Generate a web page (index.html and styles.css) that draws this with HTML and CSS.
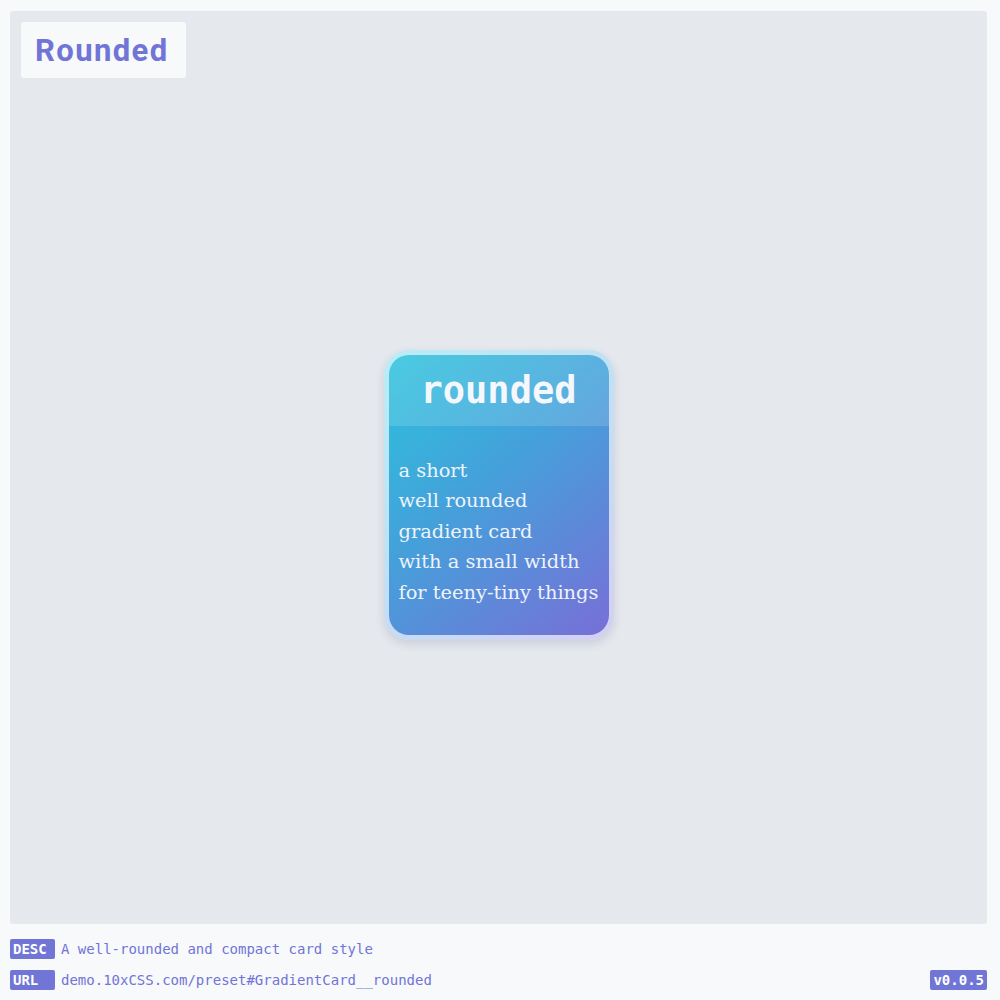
FILE: index.html
```html
<!DOCTYPE html>
<html>
<head>
<meta charset="utf-8">
<link rel="stylesheet" href="styles.css">
</head>
<body>
<main class="stage">
  <div class="title">Rounded</div>
  <div class="card">
    <div class="card-head">rounded</div>
    <div class="card-body">
      <p>a short<br>well rounded<br>gradient card<br>with a small width<br>for teeny-tiny things</p>
    </div>
  </div>
</main>
<footer class="meta">
  <div class="row"><span class="tag">DESC</span><span class="val">A well-rounded and compact card style</span></div>
  <div class="row"><span class="tag tag-url">URL</span><span class="val">demo.10xCSS.com/preset#GradientCard__rounded</span><span class="tag ver">v0.0.5</span></div>
</footer>
</body>
</html>
```
FILE: styles.css
```css
html, body { margin: 0; padding: 0; }
body {
  background: #f8f9fb;
  width: 1000px;
  height: 1000px;
  padding: 11px 13px 0 10px;
  box-sizing: border-box;
  font-family: "DejaVu Sans Mono", monospace;
}
.stage {
  position: relative;
  height: 913px;
  background: #e5e8ed;
  border-radius: 3px;
  display: flex;
  align-items: center;
  justify-content: center;
  padding-top: 55px;
  box-sizing: border-box;
}
.title {
  position: absolute;
  left: 11px;
  top: 11px;
  width: 165px;
  height: 56px;
  box-sizing: border-box;
  background: #f8f9fb;
  border-radius: 3px;
  color: #7075d6;
  font-family: Roboto, "Liberation Sans", sans-serif;
  font-weight: 700;
  font-size: 31px;
  letter-spacing: 1.4px;
  line-height: 58px;
  padding-left: 14px;
}
.card {
  width: 230px;
  box-sizing: border-box;
  border: 5px solid rgba(255, 255, 255, 0.68);
  border-radius: 25px;
  background: linear-gradient(140deg, #2ac4dd 0%, #45a0da 45%, #7a6dd7 100%);
  background-origin: border-box;
  box-shadow: 0 4px 10px rgba(40, 50, 90, 0.14);
  overflow: hidden;
  color: #eef3fb;
}
.card-head {
  height: 71px;
  background: rgba(255, 255, 255, 0.14);
  display: flex;
  align-items: center;
  justify-content: center;
  font-family: "DejaVu Sans Mono", monospace;
  font-weight: 700;
  font-size: 37px;
  color: #f4f8fc;
}
.card-body {
  padding: 30px 10px 27px 10px;
}
.card-body p {
  margin: 0;
  font-family: "DejaVu Serif", serif;
  font-size: 19.4px;
  line-height: 30.5px;
  white-space: nowrap;
}
.meta {
  padding-top: 15px;
  font-size: 14px;
  color: #7075d6;
}
.row {
  display: flex;
  align-items: center;
  height: 20px;
  margin-bottom: 11px;
}
.tag {
  background: #7075d6;
  color: #fff;
  font-weight: 700;
  border-radius: 2px;
  height: 20px;
  line-height: 20px;
  padding: 0 3px;
  min-width: 39px;
  margin-right: 6px;
}
.val { flex: 1; }
.ver { margin-right: 0; min-width: 0; padding: 0 3px; }
```
